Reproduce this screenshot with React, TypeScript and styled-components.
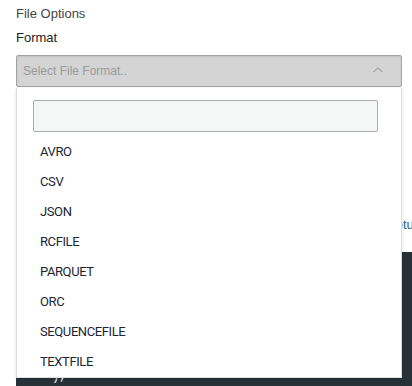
import * as React from 'react';
import styled, { createGlobalStyle } from 'styled-components';

const formats = ['AVRO', 'CSV', 'JSON', 'RCFILE', 'PARQUET', 'ORC', 'SEQUENCEFILE', 'TEXTFILE'];

const App = () => {
    const [query, setQuery] = React.useState('');

    return (
        <>
            <GlobalStyle />
            <Page>
                <Title>File Options</Title>
                <Label>Format</Label>
                <SelectWrap>
                    <Select>
                        <Placeholder>Select File Format..</Placeholder>
                        <svg width="12" height="8" viewBox="0 0 12 8">
                            <polyline points="1.5,6 6,2 10.5,6" fill="none" stroke="#a9a9a9" strokeWidth="1.3" />
                        </svg>
                    </Select>
                    <Dropdown>
                        <Search value={query} onChange={e => setQuery(e.target.value)} />
                        <List>
                            {formats.map(f => (
                                <Item key={f}>{f}</Item>
                            ))}
                        </List>
                    </Dropdown>
                </SelectWrap>
                <HintRow>
                    <Hint>Setup</Hint>
                </HintRow>
                <Editor>
                    <CodeLine>),</CodeLine>
                </Editor>
            </Page>
        </>
    );
};

const GlobalStyle = createGlobalStyle`
    html, body {
        margin: 0;
        padding: 0;
        background: #fff;
        overflow: hidden;
    }
    body {
        font-family: "Liberation Sans", Arial, sans-serif;
    }
`;

const Page = styled.div`
    width: 412px;
    height: 386px;
    box-sizing: border-box;
    padding: 6px 0 0 16px;
    overflow: hidden;
`;

const Title = styled.div`
    font-size: 13px;
    line-height: 16px;
    color: #444;
`;

const Label = styled.div`
    margin-top: 8px;
    font-size: 13px;
    line-height: 16px;
    color: #222;
`;

const SelectWrap = styled.div`
    position: relative;
    margin-top: 9px;
    width: 386px;
    z-index: 2;
`;

const Select = styled.div`
    display: flex;
    align-items: center;
    justify-content: space-between;
    height: 32px;
    box-sizing: border-box;
    padding: 0 17px 0 6px;
    background: #d4d4d4;
    border: 1px solid #a3a3a3;
    border-radius: 2px;
    box-shadow: inset 0 1px 2px rgba(0, 0, 0, 0.08);

    svg {
        margin-top: -3px;
    }
`;

const Placeholder = styled.span`
    font-size: 12px;
    color: #9a9a9a;
`;

const Dropdown = styled.div`
    position: absolute;
    top: 33px;
    left: 0;
    right: 0;
    box-sizing: border-box;
    background: #fff;
    border: 1px solid #dcdfe2;
    border-top: none;
    box-shadow: 0 1px 3px rgba(0, 0, 0, 0.12);
    padding: 12px 23px 0 16px;
`;

const Search = styled.input`
    display: block;
    width: 100%;
    height: 32px;
    box-sizing: border-box;
    margin: 0;
    background: #f5f6f6;
    border: 1px solid #a9acae;
    border-radius: 2px;
    outline: none;
`;

const List = styled.ul`
    list-style: none;
    margin: 5px 0 0;
    padding: 0;
`;

const Item = styled.li`
    height: 30px;
    line-height: 30px;
    padding-left: 7px;
    font-family: Roboto, "Liberation Sans", sans-serif;
    font-size: 13px;
    letter-spacing: -0.4px;
    color: #1a2533;
`;

const HintRow = styled.div`
    display: flex;
    margin-top: 130px;
    padding-left: 371px;
    height: 16px;
`;

const Hint = styled.span`
    font-size: 13px;
    line-height: 16px;
    color: #2d5f8f;
    white-space: nowrap;
`;

const Editor = styled.div`
    margin-top: 19px;
    height: 160px;
    background: #263238;
    padding-top: 116px;
    box-sizing: border-box;
`;

const CodeLine = styled.pre`
    margin: 0;
    padding-left: 36px;
    height: 18px;
    line-height: 18px;
    font-family: "Liberation Mono", monospace;
    font-size: 12px;
    color: #eceff1;
`;

export default App;
